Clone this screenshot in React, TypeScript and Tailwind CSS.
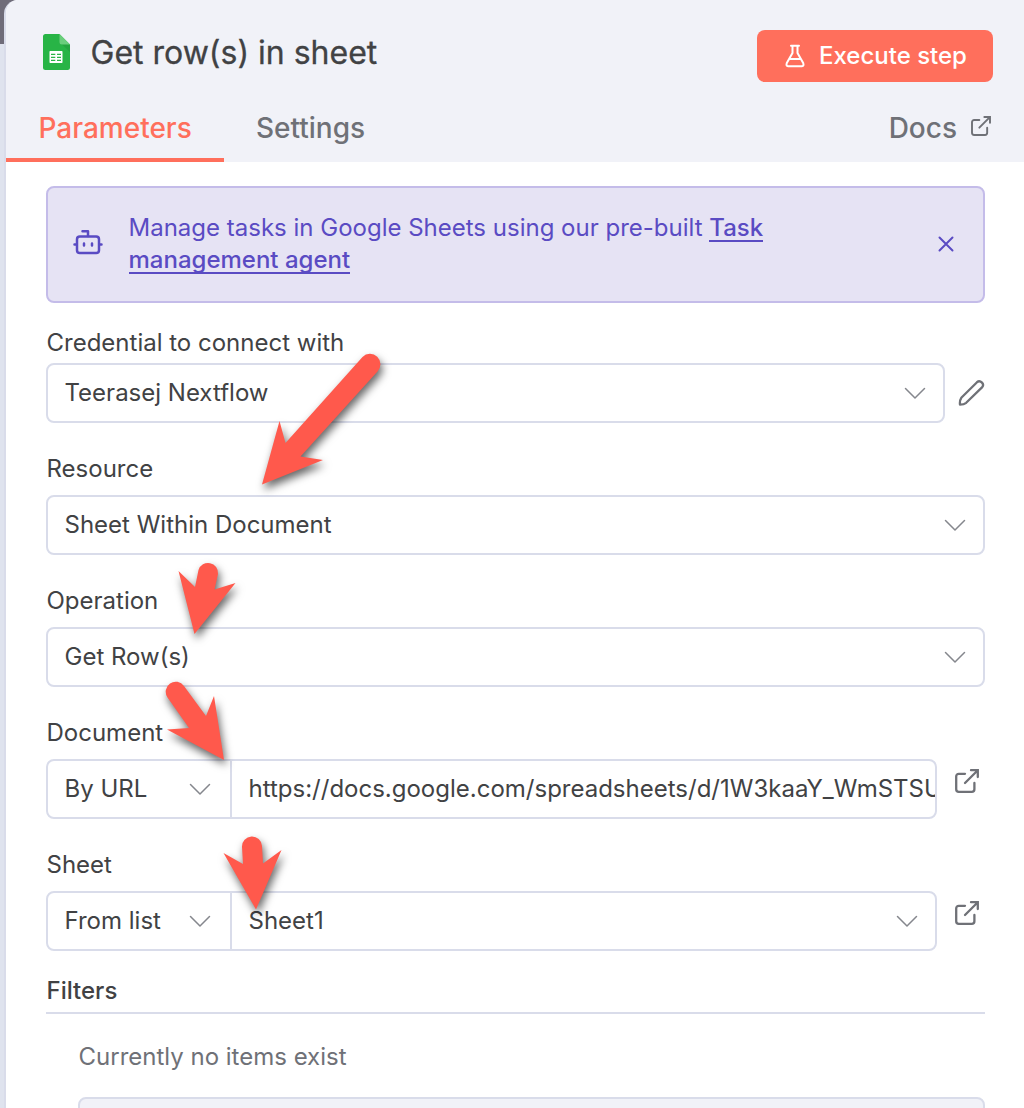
import type { ReactNode } from "react";

function Chevron() {
  return (
    <svg className="h-6 w-6 shrink-0" viewBox="0 0 24 24" fill="none" stroke="#85878d" strokeWidth="1.5" strokeLinecap="round" strokeLinejoin="round">
      <path d="M2.500 7.500 12 17l9.500-9.500" />
    </svg>
  );
}

function ExternalLink({ className }: { className: string }) {
  return (
    <svg className={className} viewBox="0 0 24 24" fill="none" stroke="#6f7177" strokeWidth="2.300" strokeLinecap="round" strokeLinejoin="round">
      <path d="M10 4.800H3.800A2.600 2.600 0 0 0 1.200 7.400V20.200A2.600 2.600 0 0 0 3.800 22.800H16.800A2.600 2.600 0 0 0 19.400 20.200V14" />
      <path d="M16 1.200H22.800V8M22.300 1.700 10 14" strokeLinejoin="miter" />
    </svg>
  );
}

function SheetsIcon() {
  return (
    <svg className="h-9 w-[27px]" viewBox="0 0 27 36">
      <path d="M2.500 0H16.500L27 10.500V33.500A2.500 2.500 0 0 1 24.500 36H2.500A2.500 2.500 0 0 1 0 33.500V2.500A2.500 2.500 0 0 1 2.500 0Z" fill="#28b446" />
      <path d="M18 9.500 27 18V10.500Z" fill="#219b3a" opacity=".6" />
      <path d="M16.500 0 27 10.500H19A2.500 2.500 0 0 1 16.500 8Z" fill="#6ace7c" />
      <rect x="6.500" y="17" width="13" height="12" rx=".8" fill="#fff" />
      <path d="M8 20.300h4.300M14 20.300h4M8 23.300h4.300M14 23.300h4M8 26.400h4.300M14 26.400h4" stroke="#28b446" strokeWidth="1.300" />
    </svg>
  );
}

function Field({ label, tight, children }: { label: string; tight?: boolean; children: ReactNode }) {
  return (
    <div className="mb-[30px] flex flex-col">
      <div className={tight ? "mb-1 h-8 pl-[0.5px] leading-8" : "mb-2.5 h-8 pl-[0.5px] leading-8"}>{label}</div>
      {children}
    </div>
  );
}

function Select({ value }: { value: string }) {
  return (
    <div className="flex h-[60px] min-w-0 flex-1 items-center justify-between rounded-lg border-2 border-[#d9dcea] bg-white pr-4 pl-[16.5px]">
      <span>{value}</span>
      <Chevron />
    </div>
  );
}

function Locator({ mode, children }: { mode: string; children: ReactNode }) {
  return (
    <div className="flex items-start">
      <div className="flex h-[60px] w-[891px] overflow-hidden rounded-lg border-2 border-[#d9dcea] bg-white">
        <div className="flex w-[184px] shrink-0 items-center justify-between border-r-2 border-[#d9dcea] pr-[18px] pl-[16.5px]">
          <span>{mode}</span>
          <Chevron />
        </div>
        <div className="flex min-w-0 flex-1 items-center justify-between overflow-hidden pl-[16.5px] whitespace-nowrap">{children}</div>
      </div>
      <ExternalLink className="mt-[10px] ml-[18px] h-6 w-6" />
    </div>
  );
}

function Arrows() {
  return (
    <svg className="pointer-events-none absolute top-0 left-0 h-[1108px] w-[500px] [filter:drop-shadow(2px_5px_4px_rgba(0,0,0,0.6))]" viewBox="0 0 500 1108" fill="#ff594c">
      <path d="M362.500 357A10 10 0 0 1 377.500 371.500L300.500 456.500 323 460 262 484.500 279.500 421 285.500 443Z" />
      <path d="M198.500 570A10 10 0 0 1 218 574L214.500 589.500 235.500 583 194.500 634 178.500 571 195 587Z" />
      <path d="M167.500 697.500A10 10 0 0 1 184 686L206 716 214 696 224 760 167 729.500 189 728Z" />
      <path d="M242 847A10 10 0 0 1 262 846L263 863.500 281.500 850 256 909.500 223.500 853 243 864Z" />
    </svg>
  );
}

export default function App() {
  return (
    <div className="relative flex h-[1108px] w-[1024px] overflow-hidden bg-[#dfe3ee] font-['Inter',sans-serif] text-[24px] text-[#414244]">
      <div className="h-11 w-4 shrink-0 bg-[#6f6c79]" />
      <main className="-ml-3 flex flex-1 flex-col overflow-hidden rounded-tl-[14px] border-l-2 border-[#d9dcea] bg-white">
        <header className="flex h-[162px] shrink-0 flex-col justify-between bg-[#f1f2f8]">
          <div className="flex items-start justify-between pt-[30px] pr-[31px] pl-[37px]">
            <div className="flex items-start pt-1">
              <SheetsIcon />
              <h1 className="mt-px ml-5 pl-[0.5px] text-[32px] leading-9 [-webkit-text-stroke:0.3px_#414244]">Get row(s) in sheet</h1>
            </div>
            <button className="flex h-[52px] w-[236px] items-center rounded-lg bg-[#ff6f5c] pl-7 font-medium text-white">
              <svg className="mr-3.5 h-6 w-5" viewBox="0 0 20 24" fill="none" stroke="#fff" strokeWidth="2" strokeLinecap="round" strokeLinejoin="round">
                <path d="M6 1.800H14M7.500 2V9L1.800 19Q.8 22.200 3 22.200H17Q19.200 22.200 18.200 19L12.500 9V2M4.500 15H15.500" />
              </svg>
              Execute step
            </button>
          </div>
          <nav className="flex h-[66px] items-stretch text-[28px] font-medium text-[#6f7177]">
            <div className="w-[218px] border-b-4 border-[#ff6f5c] pl-[32.5px] leading-[64px] text-[#ff6f5c]">Parameters</div>
            <div className="ml-8 leading-[64px]">Settings</div>
            <div className="mr-[33px] ml-auto flex leading-[64px]">
              Docs
              <ExternalLink className="mt-5 ml-3.5 h-5 w-5" />
            </div>
          </nav>
        </header>

        <div className="flex flex-col pt-6 pr-[39px] pl-10">
          <section className="mb-6 flex h-[117px] rounded-lg border-2 border-[#c4bce9] bg-[#e6e3f4] text-[#5a4bc3]">
            <svg className="mt-10 ml-6 h-7 w-8 shrink-0" viewBox="0 0 32 28" fill="none" stroke="#5a4bc3" strokeWidth="2.500" strokeLinecap="round" strokeLinejoin="round">
              <path d="M10.500 3.200H16V8M2.500 16.500H4.500M27.500 16.500H29.500M12 15.500V17.500M20 15.500V17.500" />
              <rect x="5" y="8.500" width="22" height="16.500" rx="2.800" />
            </svg>
            <p className="mt-6 ml-[24.5px] w-[680px] leading-8">
              Manage tasks in Google Sheets using our pre-built{" "}
              <a className="bg-[linear-gradient(#5a4bc3,#5a4bc3)] bg-[length:100%_2px] bg-[position:0_100%] bg-no-repeat font-medium">
                Task
                <br />
                management agent
              </a>
            </p>
            <svg className="mt-12 mr-[29.5px] ml-auto h-4 w-4" viewBox="0 0 16 16" fill="none" stroke="#5a4bc3" strokeWidth="2" strokeLinecap="round">
              <path d="m1.500 1.500 13 13m0-13-13 13" />
            </svg>
          </section>

          <Field label="Credential to connect with" tight>
            <div className="flex items-center">
              <Select value="Teerasej Nextflow" />
              <svg className="ml-3 h-7 w-7 shrink-0" viewBox="0 0 28 28" fill="none" stroke="#6f7177" strokeWidth="2.300" strokeLinejoin="round">
                <path d="M4.300 18.800 20 3.200Q22.400 1 25 3.600Q27.200 6 25 8.400L9.200 23.800Q7 25.600 3 25.600Q2.500 21.500 4.300 18.800Z" />
              </svg>
            </div>
          </Field>
          <Field label="Resource">
            <div className="flex"><Select value="Sheet Within Document" /></div>
          </Field>
          <Field label="Operation">
            <div className="flex"><Select value="Get Row(s)" /></div>
          </Field>
          <Field label="Document">
            <Locator mode="By URL">https://docs.google.com/spreadsheets/d/1W3kaaY_WmSTSU</Locator>
          </Field>
          <Field label="Sheet">
            <Locator mode="From list">
              <span>Sheet1</span>
              <span className="pr-4"><Chevron /></span>
            </Locator>
          </Field>
          <h2 className="-mt-1.5 h-[39px] border-b-2 border-[#d9dcea] pl-[0.5px] leading-8 font-medium">Filters</h2>
          <p className="mt-[27px] ml-[32.5px] leading-8 text-[#6f7177]">Currently no items exist</p>
          <div className="mt-6 ml-8 h-[60px] shrink-0 rounded-lg border-2 border-[#d9dcea] bg-[#f1f2f8]" />
        </div>
      </main>
      <Arrows />
    </div>
  );
}
